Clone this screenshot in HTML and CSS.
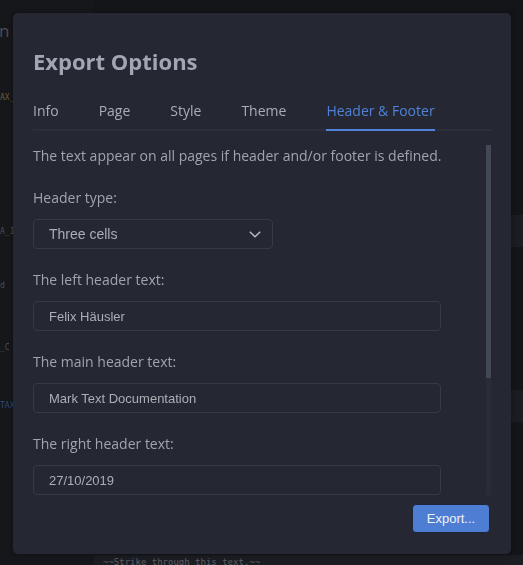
FILE: index.html
```html
<!DOCTYPE html>
<html lang="en">
<head>
<meta charset="utf-8">
<title>Export Options</title>
<link rel="stylesheet" href="styles.css">
</head>
<body>
<div class="app">
  <div class="gutter">
    <div class="g-title">n</div>
    <div class="g-line g-orange g1">AX_</div>
    <div class="g-line g-gray g2">A_I</div>
    <div class="g-line g-gray g3">d</div>
    <div class="g-line g-gray g4">_C</div>
    <div class="g-line g-blue g5">TAX</div>
  </div>
  <div class="editor">
    <div class="code-block cb1"></div>
    <div class="code-block cb2"></div>
    <div class="code-block cb3">~~Strike through this text.~~</div>
  </div>
</div>

<div class="modal">
  <h1 class="modal-title">Export Options</h1>
  <div class="tabs">
    <div class="tab">Info</div>
    <div class="tab">Page</div>
    <div class="tab">Style</div>
    <div class="tab">Theme</div>
    <div class="tab active">Header &amp; Footer</div>
  </div>
  <div class="scroll">
    <div class="scroll-content">
      <p class="desc">The text appear on all pages if header and/or footer is defined.</p>
      <div class="field">
        <div class="label">Header type:</div>
        <div class="select">
          <span>Three cells</span>
          <svg class="chev" width="12" height="7" viewBox="0 0 12 7"><polyline points="0.8,0.8 6,5.8 11.2,0.8" fill="none" stroke="#b9bcc3" stroke-width="1.4"/></svg>
        </div>
      </div>
      <div class="field">
        <div class="label">The left header text:</div>
        <div class="input">Felix Häusler</div>
      </div>
      <div class="field">
        <div class="label">The main header text:</div>
        <div class="input">Mark Text Documentation</div>
      </div>
      <div class="field">
        <div class="label">The right header text:</div>
        <div class="input">27/10/2019</div>
      </div>
    </div>
    <div class="scrollbar"><div class="thumb"></div></div>
  </div>
  <div class="footer">
    <button class="btn">Export...</button>
  </div>
</div>
</body>
</html>
```

FILE: styles.css
```css
* { box-sizing: border-box; }
html, body { margin: 0; padding: 0; }
body {
  background: #16171b;
  width: 523px;
  height: 565px;
  overflow: hidden;
  font-family: "Open Sans", "DejaVu Sans", sans-serif;
}

/* backdrop application */
.app {
  display: grid;
  grid-template-columns: 94px 1fr;
  height: 565px;
}
.gutter {
  background: #16171b;
  overflow: hidden;
}
.g-title {
  font-size: 17px;
  color: #4a4c52;
  line-height: 20px;
  margin-top: 21px;
  margin-left: -1px;
}
.g-line {
  font-family: "DejaVu Sans Mono", monospace;
  font-size: 8px;
  line-height: 10px;
}
.g-orange { color: #6e5b3a; }
.g-gray { color: #4c4e54; }
.g-blue { color: #2f4a7a; }
.g1 { margin-top: 52px; }
.g2 { margin-top: 124px; }
.g3 { margin-top: 44px; }
.g4 { margin-top: 52px; }
.g5 { margin-top: 48px; }

.editor {
  background: #141518;
  display: flex;
  flex-direction: column;
}
.code-block { background: #1c1d22; }
.cb1 { margin-top: 215px; height: 32px; }
.cb2 { margin-top: 143px; height: 32px; }
.cb3 {
  margin-top: 133px;
  flex: 1;
  padding: 1px 0 0 9px;
  font-family: "DejaVu Sans Mono", monospace;
  font-size: 9px;
  line-height: 12px;
  color: #5c5e64;
  white-space: nowrap;
}

/* modal dialog overlay */
.modal {
  position: fixed;
  left: 13px;
  top: 13px;
  width: 498px;
  height: 541px;
  background: #252832;
  border-radius: 5px;
  padding: 32px 20px 21px 20px;
  display: flex;
  flex-direction: column;
  box-shadow: 0 0 6px rgba(0,0,0,0.35);
}
.modal-title {
  margin: 0;
  font-size: 22px;
  line-height: 32px;
  font-weight: 700;
  color: #a1a6b2;
}
.tabs {
  margin-top: 24px;
  display: flex;
  gap: 40px;
  border-bottom: 2px solid #2c2f39;
}
.tab {
  font-size: 14px;
  line-height: 20px;
  padding-bottom: 8px;
  margin-bottom: -2px;
  border-bottom: 2px solid transparent;
  color: #a8adb8;
}
.tab.active {
  color: #4f82d8;
  border-bottom-color: #4f82d8;
}

.scroll {
  margin-top: 14px;
  height: 350px;
  display: flex;
  overflow: hidden;
}
.scroll-content {
  flex: 1;
  overflow: hidden;
  padding: 1px 45px 0 0;
}
.desc {
  margin: 0 0 22px 0;
  font-size: 14px;
  line-height: 20px;
  color: #a0a4ad;
  white-space: nowrap;
}
.field { margin-bottom: 21px; }
.label {
  font-size: 14px;
  line-height: 20px;
  color: #a0a4ad;
  margin-bottom: 11px;
}
.select, .input {
  height: 30px;
  border: 1px solid #363a45;
  border-radius: 4px;
  display: flex;
  align-items: center;
  padding: 0 11px 0 15px;
  font-family: "Liberation Sans", Arial, sans-serif;
  color: #abaeb4;
}
.select {
  width: 240px;
  font-size: 14px;
  justify-content: space-between;
}
.input {
  font-size: 13px;
}
.chev { display: block; margin-top: 1px; }

.scrollbar {
  width: 5px;
  height: 350px;
  background: #2a2d37;
}
.thumb {
  height: 233px;
  background: #434955;
}

.footer {
  margin-top: 9px;
  display: flex;
  justify-content: flex-end;
}
.btn {
  width: 78px;
  height: 29px;
  border: 1px solid #1e2536;
  border-radius: 4px;
  background: #4e7ed3;
  color: #eef2f8;
  font-family: "Liberation Sans", Arial, sans-serif;
  font-size: 13px;
  padding: 0;
  margin-right: 1px;
}
```
